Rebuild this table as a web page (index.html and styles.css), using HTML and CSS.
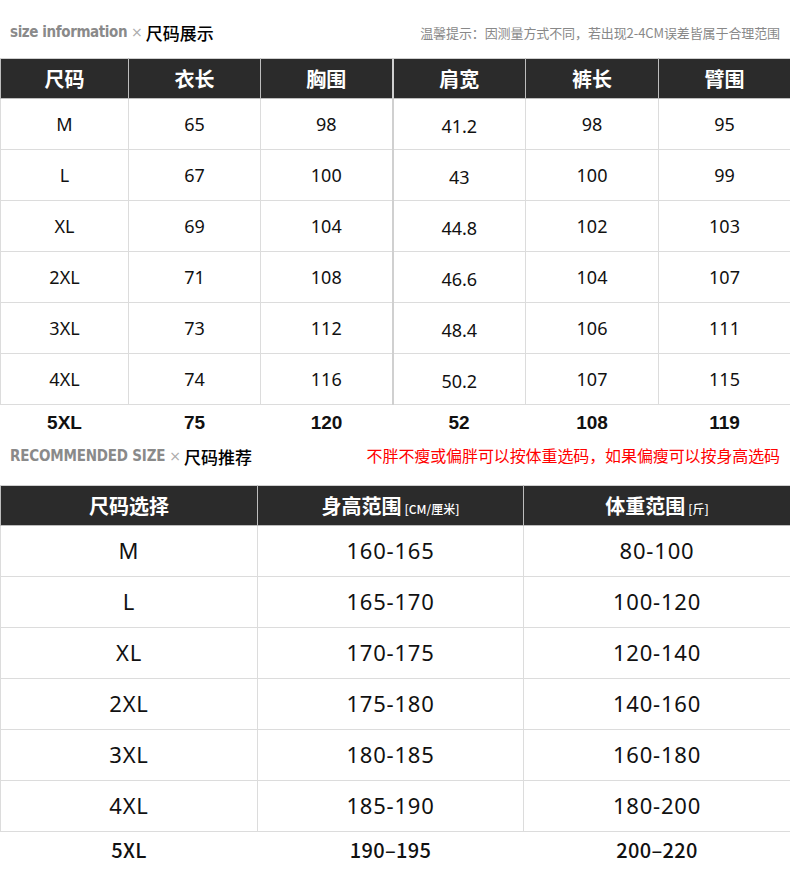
FILE: index.html
```html
<!DOCTYPE html>
<html lang="zh">
<head>
<meta charset="utf-8">
<link rel="stylesheet" href="styles.css">
</head>
<body>
<div class="page">
  <div class="title title-top">
    <div class="title-left"><span class="en">size information</span><span class="x">×</span><span class="cn">尺码展示</span></div>
    <div class="note">温馨提示：因测量方式不同，若出现2-4CM误差皆属于合理范围</div>
  </div>
  <table class="t1">
    <colgroup><col class="w128"><col class="w132"><col class="w132"><col class="w133"><col class="w133"><col class="w132"></colgroup>
    <thead>
      <tr><th>尺码</th><th>衣长</th><th>胸围</th><th class="sep">肩宽</th><th>裤长</th><th>臂围</th></tr>
    </thead>
    <tbody>
      <tr><td>M</td><td>65</td><td>98</td><td class="sep low">41.2</td><td>98</td><td>95</td></tr>
      <tr><td>L</td><td>67</td><td>100</td><td class="sep low">43</td><td>100</td><td>99</td></tr>
      <tr><td>XL</td><td>69</td><td>104</td><td class="sep low">44.8</td><td>102</td><td>103</td></tr>
      <tr><td>2XL</td><td>71</td><td>108</td><td class="sep low">46.6</td><td>104</td><td>107</td></tr>
      <tr><td>3XL</td><td>73</td><td>112</td><td class="sep low">48.4</td><td>106</td><td>111</td></tr>
      <tr><td>4XL</td><td>74</td><td>116</td><td class="sep low">50.2</td><td>107</td><td>115</td></tr>
      <tr class="last"><td>5XL</td><td>75</td><td>120</td><td>52</td><td>108</td><td>119</td></tr>
    </tbody>
  </table>
  <div class="title title-mid">
    <div class="title-left"><span class="en en2">RECOMMENDED SIZE</span><span class="x">×</span><span class="cn">尺码推荐</span></div>
    <div class="red">不胖不瘦或偏胖可以按体重选码，如果偏瘦可以按身高选码</div>
  </div>
  <table class="t2">
    <colgroup><col class="w257"><col class="w266"><col class="w267"></colgroup>
    <thead>
      <tr><th>尺码选择</th><th>身高范围<small>[CM/厘米]</small></th><th>体重范围<small>[斤]</small></th></tr>
    </thead>
    <tbody>
      <tr><td>M</td><td>160-165</td><td>80-100</td></tr>
      <tr><td>L</td><td>165-170</td><td>100-120</td></tr>
      <tr><td>XL</td><td>170-175</td><td>120-140</td></tr>
      <tr><td>2XL</td><td>175-180</td><td>140-160</td></tr>
      <tr><td>3XL</td><td>180-185</td><td>160-180</td></tr>
      <tr><td>4XL</td><td>185-190</td><td>180-200</td></tr>
      <tr class="last"><td>5XL</td><td class="shift">190–195</td><td>200–220</td></tr>
    </tbody>
  </table>
</div>
</body>
</html>
```

FILE: styles.css
```css
html, body {
  margin: 0;
  padding: 0;
  background: #fff;
}
.page {
  width: 790px;
  height: 874px;
  overflow: hidden;
  font-family: "Noto Sans", "Noto Sans CJK SC", sans-serif;
  color: #111;
}
.title {
  display: flex;
  justify-content: space-between;
  align-items: center;
  padding: 0 10px;
  box-sizing: border-box;
}
.title-top {
  height: 58px;
  padding-top: 6px;
}
.title-mid {
  height: 44px;
  align-items: flex-start;
  padding-top: 3px;
}
.title-left {
  display: flex;
  align-items: center;
}
.en {
  font-family: "DejaVu Sans Condensed", "DejaVu Sans", sans-serif;
  font-weight: bold;
  font-size: 15px;
  color: #8a8a8a;
  letter-spacing: -0.4px;
}
.en2 {
  font-size: 15px;
  letter-spacing: -0.2px;
}
.x {
  color: #aaa;
  font-family: "DejaVu Sans", sans-serif;
  font-size: 14px;
  margin: 0 3px 0 4px;
}
.cn {
  font-family: "Noto Sans CJK SC", sans-serif;
  font-weight: 500;
  font-size: 17px;
  color: #000;
}
.note {
  font-family: "Noto Sans CJK SC", sans-serif;
  font-size: 13px;
  color: #888;
  letter-spacing: -0.1px;
}
.red {
  font-family: "Noto Sans CJK SC", sans-serif;
  font-size: 16px;
  color: #f00;
  letter-spacing: -0.1px;
  margin-top: -1px;
}
table {
  width: 790px;
  border-collapse: collapse;
  table-layout: fixed;
}
.w128 { width: 128px; }
.w132 { width: 132px; }
.w133 { width: 133px; }
.w257 { width: 257px; }
.w266 { width: 266px; }
.w267 { width: 267px; }
th {
  background: #2b2b2b;
  color: #fff;
  font-family: "Noto Sans CJK SC", sans-serif;
  font-weight: bold;
  font-size: 20px;
  height: 40px;
  box-sizing: border-box;
  padding: 0;
  border: 1px solid #bdbdbd;
  border-top: 1px solid #cfcfcf;
}
td {
  height: 51px;
  box-sizing: border-box;
  padding: 0;
  text-align: center;
  border: 1px solid #dcdcdc;
  font-size: 18px;
  line-height: 20px;
  color: #111;
}
.t1 th.sep, .t1 td.sep {
  border-left: 2px solid #d0d0d0;
}
.t1 td {
  padding-bottom: 0;
}
.t1 td.low {
  padding-top: 4px;
}
.t1 tr.last td {
  height: 36px;
  border: none;
  font-family: "Liberation Sans", Arial, sans-serif;
  font-weight: bold;
  font-size: 19px;
  padding: 0;
  color: #111;
}
.t2 th small {
  font-size: 12px;
  font-weight: 500;
  margin-left: 3px;
}
.t2 td {
  font-size: 22px;
  letter-spacing: 0.8px;
  padding-bottom: 2px;
}
.t2 tr.last td {
  height: 42px;
  border: none;
  font-family: "Noto Sans CJK SC", sans-serif;
  font-weight: 500;
  font-size: 20px;
  letter-spacing: 0.3px;
  padding: 0 0 4px;
}
.t2 td.shift {
  padding-left: 10px;
}
```
